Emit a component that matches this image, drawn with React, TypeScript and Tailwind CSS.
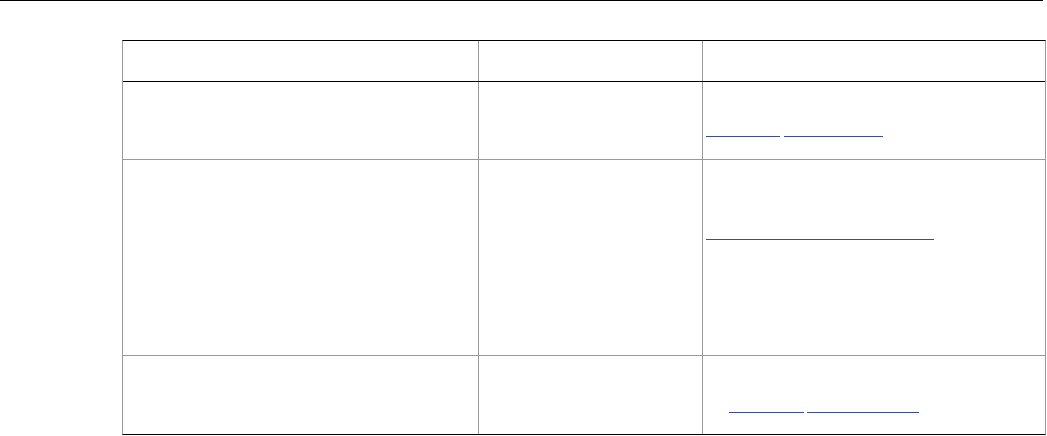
const grey = "border-[#9a9a9a]";

function LinkLine({ w }: { w: number }) {
  return <a href="#" aria-label="link" className="inline-block h-[15px] border-b border-[#3a4aa6]" style={{ width: w }} />;
}

export default function App() {
  return (
    <div className="min-h-[436px] w-[1047px] bg-white font-['Liberation_Sans',Arial,sans-serif] text-[14px]">
      <div className="h-px w-[1043px] bg-black" />

      <div className={`ml-[122px] mt-[39px] flex w-[924px] flex-col border-x border-t border-b border-t-black border-b-black ${grey}`}>
        {/* header */}
        <div className="grid h-[41px] grid-cols-[355px_224px_343px] border-b border-black">
          <div />
          <div className={`border-l ${grey}`} />
          <div className={`border-l ${grey}`} />
        </div>

        {/* row 1 */}
        <div className={`grid h-[78px] grid-cols-[355px_224px_343px] border-b ${grey}`}>
          <div />
          <div className={`border-l ${grey}`} />
          <div className={`border-l ${grey} pl-[3px] pt-[40px]`}>
            <div className="flex gap-[4px]">
              <LinkLine w={74} />
              <LinkLine w={99} />
            </div>
          </div>
        </div>

        {/* row 2 */}
        <div className={`grid h-[196px] grid-cols-[355px_224px_343px] border-b ${grey}`}>
          <div />
          <div className={`border-l ${grey}`} />
          <div className={`border-l ${grey} pl-[3px] pt-[65px]`}>
            <LinkLine w={228} />
          </div>
        </div>

        {/* row 3 */}
        <div className="grid h-[78px] grid-cols-[355px_224px_343px]">
          <div />
          <div className={`border-l ${grey}`} />
          <div className={`border-l ${grey} pl-[26px] pt-[42px]`}>
            <div className="flex gap-[3px]">
              <LinkLine w={75} />
              <LinkLine w={112} />
            </div>
          </div>
        </div>
      </div>
    </div>
  );
}
